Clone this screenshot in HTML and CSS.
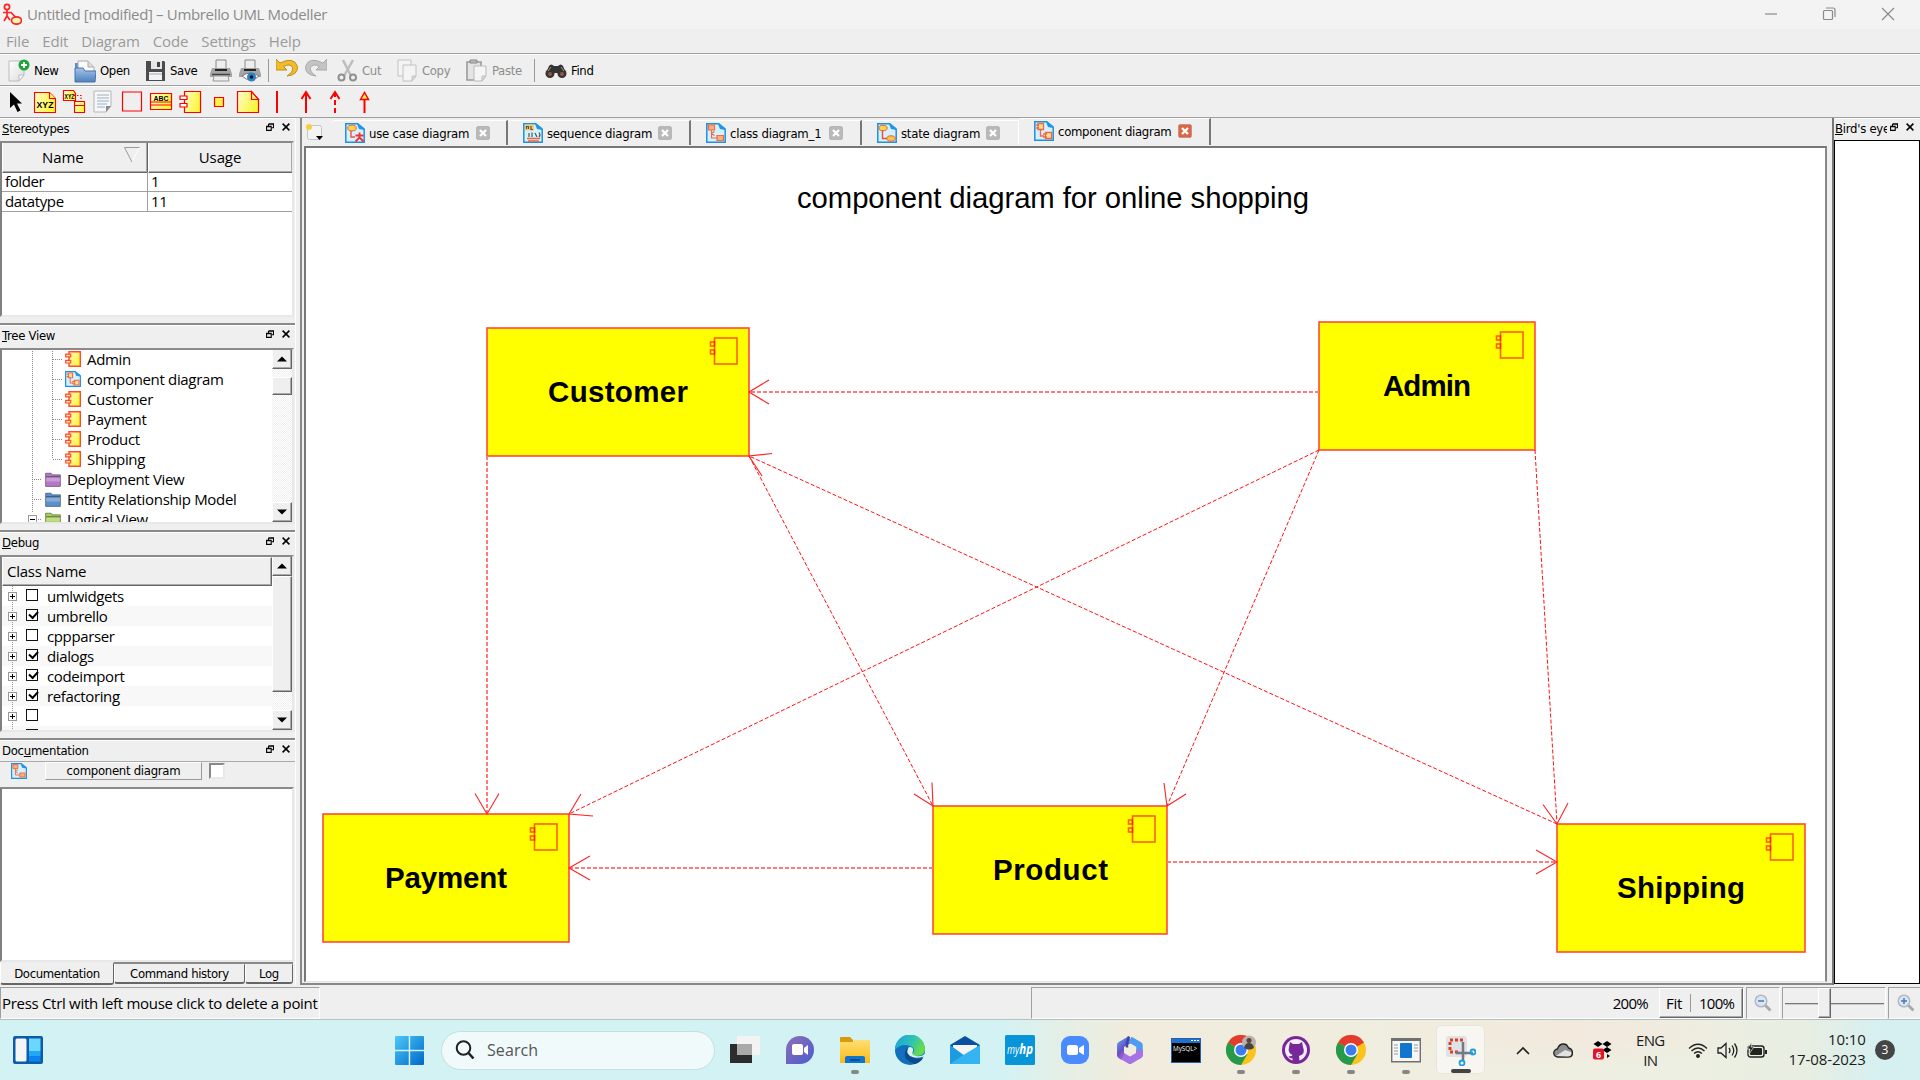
FILE: index.html
```html
<!DOCTYPE html>
<html lang="en">
<head>
<meta charset="utf-8">
<title>Untitled [modified] – Umbrello UML Modeller</title>
<link rel="stylesheet" href="styles.css">
</head>
<body>
<svg class="defs" width="0" height="0">
  <defs>
    <linearGradient id="gy" x1="0" x2="1" y1="0" y2=".4"><stop offset="0" stop-color="#fffbd0"/><stop offset="1" stop-color="#fdf63a"/></linearGradient>
    <linearGradient id="gwin" x1="0" x2="1" y1="0" y2="1"><stop offset="0" stop-color="#4cc8fb"/><stop offset="1" stop-color="#0067c8"/></linearGradient>
    <linearGradient id="gfold" x1="0" x2="0" y1="0" y2="1"><stop offset="0" stop-color="#ffdf73"/><stop offset="1" stop-color="#fcb918"/></linearGradient>
    <linearGradient id="gchat" x1="0" x2="1" y1="0" y2="1"><stop offset="0" stop-color="#8f6fb4"/><stop offset="1" stop-color="#4a5cd0"/></linearGradient>
    <linearGradient id="gedge" x1="0" x2="1" y1="0" y2=".4"><stop offset="0" stop-color="#1c9fe2"/><stop offset=".6" stop-color="#2cc3b5"/><stop offset="1" stop-color="#66dc4c"/></linearGradient>
    <linearGradient id="gopen" x1="0" x2="0" y1="0" y2="1"><stop offset="0" stop-color="#a4c4ea"/><stop offset="1" stop-color="#4f80bd"/></linearGradient>
    <linearGradient id="gm" x1="0" x2=".6" y1="0" y2="1"><stop offset="0" stop-color="#5a8fe8"/><stop offset=".5" stop-color="#6a4fc4"/><stop offset="1" stop-color="#b06ae0"/></linearGradient>
    <linearGradient id="gpage" x1="0" x2="1" y1="0" y2="1"><stop offset="0" stop-color="#fff"/><stop offset="1" stop-color="#dcdcdc"/></linearGradient>
  </defs>
  <symbol id="comp" viewBox="0 0 16 16"><path d="M4 .7h11.3v14.6H4z" fill="url(#gy)" stroke="#ff4a30" stroke-width="1.4"/><path d="M.7 3.2h5v2.6h-5zM.7 9.4h5V12h-5z" fill="#ffe9a0" stroke="#ff4a30" stroke-width="1.2"/></symbol>
  <symbol id="page" viewBox="0 0 20 20"><path d="M.8.8h12L19.2 6v13.2H.8z" fill="#d5f1fd" stroke="#1e90e0" stroke-width="1.5"/><path d="M12 1l2 5 5 1V5z" fill="#2196e8"/></symbol>
  <symbol id="pcomp" viewBox="0 0 20 20"><use href="#page"/><path d="M4 2.500h5.500v6H4zM11.500 11.500h6v6h-6z" fill="#ffe28a" stroke="#f2664a" stroke-width="1.300"/><path d="M2 4h3M2 7h3M6.500 8.500V15H10M9 13h4M9 16h4" fill="none" stroke="#f2664a" stroke-width="1.300"/></symbol>
  <symbol id="pclass" viewBox="0 0 20 20"><use href="#page"/><path d="M2.500 2h6v5h-6zM11 12.500h6.500v5H11z" fill="#fbb07a" stroke="#ee6a48" stroke-width="1.200"/><path d="M5.500 7v8H11M5.500 10.500l3-2M5.500 10.500l3 2" fill="none" stroke="#ee6a48" stroke-width="1.200"/></symbol>
  <symbol id="pstate" viewBox="0 0 20 20"><use href="#page"/><path d="M5.500 7v8.500H11" fill="none" stroke="#f04a3c" stroke-width="1.400"/><ellipse cx="6" cy="5" rx="4.200" ry="2.700" fill="#ffd34d" stroke="#e0643c"/><ellipse cx="14" cy="15.500" rx="4.200" ry="2.700" fill="#ffc04d" stroke="#e0643c"/></symbol>
  <symbol id="puse" viewBox="0 0 20 20"><use href="#page"/><ellipse cx="7" cy="5" rx="4.300" ry="2.900" fill="#ffd34d" stroke="#e0643c"/><path d="M6 8v6h4" fill="none" stroke="#f25040" stroke-width="1.400"/><path d="M14.500 9.500v5.500M10.500 12.500h8M14.500 14.500l-4 4M14.500 14.500l4 4" fill="none" stroke="#f23030" stroke-width="1.800"/></symbol>
  <symbol id="pseq" viewBox="0 0 20 20"><use href="#page"/><path d="M2 1.500h9v6H2z" fill="#f7c96a"/><path d="M3.500 6V3.500h2V6M8 3v3.500h2M6 10v4M9 9.500v4.500M12 10l2 4M16 9.500q2 2.500 0 4.500" fill="none" stroke="#555" stroke-width="1.200"/><path d="M4 15.500h13M5 18h11" stroke="#f0643c" stroke-width="1.400"/></symbol>
  <symbol id="float" viewBox="0 0 8 8"><path d="M2.500 .7h5v4h-2M2.500 1.200h5M2.500 1v2" fill="none" stroke="#000" stroke-width="1.100"/><path d="M.6 3.300h4.600v4.100H.6zM.6 3.800h4.600" fill="none" stroke="#000" stroke-width="1.100"/></symbol>
  <symbol id="x" viewBox="0 0 8 8"><path d="M.6.600l6.800 6.800M7.400.600L.6 7.400" stroke="#000" stroke-width="1.500"/></symbol>
  <symbol id="up" viewBox="0 0 10 6"><path d="M0 5.500L5 .5l5 5z"/></symbol>
  <symbol id="down" viewBox="0 0 10 6"><path d="M0 .5L5 5.500l5-5z"/></symbol>
  <symbol id="folder" viewBox="0 0 16 15"><path d="M.6 3V1.200h5.500l.8 1.600H15.400v11.600H.6z" fill="currentColor" stroke="#0006"/><path d="M1 4.800h14" stroke="#0007"/><path d="M1 5.500h14v4H1z" fill="#fff4"/></symbol>
  <symbol id="tclose" viewBox="0 0 14 14"><rect x=".5" y=".5" width="13" height="13" rx="1.500" fill="currentColor" stroke="#0002"/><path d="M4 4l6 6M10 4l-6 6" stroke="#fff" stroke-width="2.300"/></symbol>
  <symbol id="mag" viewBox="0 0 18 18"><path d="M11 11l5.500 5.500" stroke="#aaa" stroke-width="3"/><circle cx="7" cy="7" r="5.800" fill="#d5e6f8" stroke="#b4b8bf" stroke-width="1.500"/></symbol>
  <symbol id="chrome" viewBox="0 0 30 30"><circle cx="15" cy="15" r="15" fill="#fcc31e"/><path d="M15 15L2 7.500A15 15 0 0 1 28 7.500z" fill="#e33b2e"/><path d="M15 15L2 7.500A15 15 0 0 0 15 30l6.500-11z" fill="#26994a"/><circle cx="15" cy="15" r="7" fill="#fff"/><circle cx="15" cy="15" r="5.500" fill="#3b7df0"/></symbol>
</svg>

<header class="titlebar">
  <svg class="logo" width="20" height="22" viewBox="0 0 20 22" fill="none" stroke="#f22" stroke-width="1.700"><circle cx="5" cy="4" r="2.600"/><path d="M5 7v6M1 9.500h8l5 5M5 13l-3 5M5 13l3 4"/><ellipse cx="14.500" cy="17.500" rx="5" ry="3.600" fill="#fff8b0"/></svg>
  <span class="title">Untitled [modified] – Umbrello UML Modeller</span>
  <svg class="winbtns" width="132" height="14" viewBox="0 0 132 14" fill="none" stroke="#8a8a8a" stroke-width="1.200"><path d="M0 7h12"/><rect x="58.500" y="3.500" width="9" height="9" rx="1"/><path d="M61 1h7q2 0 2 2v7M117 1l12 12M129 1l-12 12"/></svg>
</header>
<nav class="menubar"><span>File</span><span>Edit</span><span>Diagram</span><span>Code</span><span>Settings</span><span>Help</span></nav>

<div class="toolbar main">
  <div class="tool t-new"><svg width="22" height="24" viewBox="0 0 22 24"><path d="M1 2h15v14l-5 6H1z" fill="url(#gpage)" stroke="#bbb"/><path d="M16 16h-5v6z" fill="#fff" stroke="#bbb"/><circle cx="16" cy="6" r="5.500" fill="#1fa33c"/><path d="M16 3v6M13 6h6" stroke="#fff" stroke-width="1.800"/></svg>New</div>
  <div class="tool t-open"><svg width="22" height="24" viewBox="0 0 22 24"><path d="M1 4h6v6H1z" fill="#5d8dc6"/><path d="M4 2h10l6 6v8H4z" fill="#fafafa" stroke="#aaa"/><path d="M14 2v6h6" fill="#ddd" stroke="#aaa"/><path d="M1 9h8l2 3h11l-1 11H1z" fill="url(#gopen)" stroke="#4672aa"/></svg>Open</div>
  <div class="tool t-save"><svg width="21" height="23" viewBox="0 0 21 23"><path d="M1 2h18l1 1v19H1z" fill="#4c4c50"/><path d="M6 2h11v8H6z" fill="#e6e6e6"/><path d="M12 3h3v5h-3z" fill="#444"/><path d="M4 13h13v8H4z" fill="#f4f4f4"/><path d="M4 15h13" stroke="#aaa"/></svg>Save</div>
  <svg class="i-print" width="22" height="24" viewBox="0 0 22 24"><path d="M6 1h10v9H6z" fill="#eee" stroke="#888"/><path d="M2 9h18l2 6v3H0v-3z" fill="#a4a4a4"/><path d="M5 11h12" stroke="#222" stroke-width="2"/><path d="M2 15.500h18" stroke="#444" stroke-width="1.500"/><path d="M4 17h14l1 5H3z" fill="#ececec" stroke="#999"/></svg>
  <svg class="i-prev" width="22" height="24" viewBox="0 0 22 24"><path d="M6 1h10v9H6z" fill="#eee" stroke="#888"/><path d="M2 9h18l2 6v3H0v-3z" fill="#a4a4a4"/><path d="M5 11h12" stroke="#222" stroke-width="2"/><path d="M3 17q8-6 17 0-8 8-17 0z" fill="#fff" stroke="#777"/><circle cx="12.500" cy="18" r="4.500" fill="#2c83c4"/><circle cx="12.500" cy="18" r="1.800" fill="#112"/></svg>
  <i class="sep"></i>
  <svg class="i-undo" width="22" height="20" viewBox="0 0 22 20"><path d="M0 1v11h11L7.500 8.500Q14 5 16.500 9.500 17.500 14 11 18 22 17 21.500 8.500 18-2 4 5z" fill="#f0bc2c" stroke="#c08f14"/></svg>
  <svg class="i-redo" width="22" height="20" viewBox="0 0 22 20"><path d="M22 1v11H11l3.500-3.500Q8 5 5.500 9.500 4.500 14 11 18 0 17 .5 8.500 4-2 18 5z" fill="#c4c4c4" stroke="#aaa"/></svg>
  <div class="tool off t-cut"><svg width="21" height="23" viewBox="0 0 21 23" fill="none"><path d="M6 1l8 16M16 1L7 17" stroke="#bdbdbd" stroke-width="2.500"/><circle cx="4.500" cy="18.500" r="3" stroke="#909090" stroke-width="2"/><circle cx="16" cy="18.500" r="3" stroke="#909090" stroke-width="2"/></svg>Cut</div>
  <div class="tool off t-copy"><svg width="21" height="23" viewBox="0 0 21 23"><path d="M1 1h13v16H1z" fill="#f4f4f4" stroke="#c2c2c2"/><path d="M6 6h13v11l-4 5H6z" fill="#f4f4f4" stroke="#c2c2c2"/><path d="M19 17h-4v5z" fill="#ddd" stroke="#c2c2c2"/></svg>Copy</div>
  <div class="tool off t-paste"><svg width="23" height="23" viewBox="0 0 23 23"><path d="M2 3h14v18H2z" fill="#e4e4e4" stroke="#9b9b9b" stroke-width="1.600"/><path d="M5 1h7v3H5z" fill="#bbb" stroke="#888"/><path d="M9 7h12v10l-4 5H9z" fill="#f5f5f5" stroke="#bbb"/><path d="M21 17h-4v5z" fill="#ddd" stroke="#bbb"/></svg>Paste</div>
  <i class="sep"></i>
  <div class="tool t-find"><svg width="22" height="16" viewBox="0 0 22 16"><path d="M4 3q2-3 5 0h4q3-3 5 0l3 7H1z" fill="#333"/><circle cx="5" cy="10.500" r="4.500" fill="#3a3230"/><circle cx="17" cy="10.500" r="4.500" fill="#3a3230"/><circle cx="5" cy="11" r="2" fill="#8a5a48"/><circle cx="17" cy="11" r="2" fill="#8a5a48"/><path d="M6 4l-3 4M16 4l3 4" stroke="#999"/></svg>Find</div>
</div>

<div class="toolbar work">
  <svg width="584" height="24" viewBox="0 0 584 24" fill="none">
    <path d="M10 2v16l4-3.500 3.500 7.500 3-1.500-3.500-7h5z" fill="#000"/>
    <g stroke="#f00" stroke-width="1.100"><path d="M34.500 2.500h15l6 6v14h-21z" fill="url(#gy)"/><path d="M49.500 2.500v6h6" fill="#fff36b"/><path d="M63.500.500h10l2 3v7h-12z" fill="url(#gy)"/><path d="M74 5.500h7v5" stroke-dasharray="1.500 1.500"/><path d="M74.500 11.500h10v11h-10zM74.500 15.500h10" fill="url(#gy)"/></g>
    <text class="glyph" x="45" y="18" text-anchor="middle" textLength="17" lengthAdjust="spacingAndGlyphs">XYZ</text><text class="glyph s" x="69.500" y="8.500" text-anchor="middle" textLength="10" lengthAdjust="spacingAndGlyphs">XYZ</text>
    <path d="M94 1h17v15l-5 6H94z" fill="#f7f7f7" stroke="#b5b5b5"/><path d="M97 5h12M97 8h12M97 11h12M97 14h10M97 17h8" stroke="#9bb0c8"/><path d="M111 16h-5v6z" fill="#888"/>
    <g stroke="#f00" stroke-width="1.200"><path d="M122.500 2h19v19h-19z"/><path d="M150.500 3.500h21v16h-21zM150.500 12h21M150.500 15h21" fill="url(#gy)"/><path d="M184.500 1.500h16v21h-16z" fill="url(#gy)"/><path d="M180 6h7v3.500h-7zM180 13.500h7V17h-7z" fill="#fff"/><path d="M214.500 7.500h9v9h-9z" fill="#fff04c"/><path d="M237.500 1.500h14l7 8v13h-21z" fill="url(#gy)"/><path d="M251.500 1.500v8h7z" fill="#fff46a"/></g>
    <text class="glyph s" x="161" y="10.500" text-anchor="middle" textLength="15" lengthAdjust="spacingAndGlyphs">ABC</text>
    <g stroke="#f00" stroke-width="2"><path d="M277 1v22M306 2v21M301.500 9l4.500-7 4.500 7"/><path d="M335 2v21" stroke-dasharray="5 3"/><path d="M330.500 9l4.500-7 4.500 7M364.500 8v15"/><path d="M360.500 9.500l4-7 4 7z" stroke-width="1.500" fill="#ffef50"/></g>
  </svg>
</div>

<main class="workspace">
  <aside class="left">
    <section class="dock d-ster">
      <h2><span><u>S</u>tereotypes</span><svg width="8" height="8"><use href="#float"/></svg><svg width="8" height="8"><use href="#x"/></svg></h2>
      <div class="panel">
        <div class="grid head"><div class="cell">Name<svg class="sort" width="16" height="16" viewBox="0 0 16 16" fill="none"><path d="M15 1L8 15" stroke="#fff"/><path d="M15.500.500H.5L8 15" stroke="#999"/></svg></div><div class="cell">Usage</div></div>
        <div class="grid"><div>folder</div><div>1</div></div>
        <div class="grid"><div>datatype</div><div>11</div></div>
      </div>
    </section>
    <section class="dock d-tree">
      <h2><span><u>T</u>ree View</span><svg width="8" height="8"><use href="#float"/></svg><svg width="8" height="8"><use href="#x"/></svg></h2>
      <div class="panel split">
        <ul class="tree">
          <li class="deep"><svg width="16" height="16"><use href="#comp"/></svg>Admin</li>
          <li class="deep"><svg width="16" height="16"><use href="#pcomp"/></svg>component diagram</li>
          <li class="deep"><svg width="16" height="16"><use href="#comp"/></svg>Customer</li>
          <li class="deep"><svg width="16" height="16"><use href="#comp"/></svg>Payment</li>
          <li class="deep"><svg width="16" height="16"><use href="#comp"/></svg>Product</li>
          <li class="deep last"><svg width="16" height="16"><use href="#comp"/></svg>Shipping</li>
          <li><svg class="purple" width="16" height="15"><use href="#folder"/></svg>Deployment View</li>
          <li><svg class="blue" width="16" height="15"><use href="#folder"/></svg>Entity Relationship Model</li>
          <li class="exp"><i class="pm minus"></i><svg class="green" width="16" height="15"><use href="#folder"/></svg>Logical View</li>
        </ul>
        <div class="scroll"><b class="btn"><svg width="10" height="6"><use href="#up"/></svg></b><b class="thumb small"></b><b class="btn end"><svg width="10" height="6"><use href="#down"/></svg></b></div>
      </div>
    </section>
    <section class="dock d-debug">
      <h2><span><u>D</u>ebug</span><svg width="8" height="8"><use href="#float"/></svg><svg width="8" height="8"><use href="#x"/></svg></h2>
      <div class="panel split">
        <div class="classes">
          <div class="clshead">Class Name</div>
          <ul class="checks">
            <li><i class="pm"></i><em></em>umlwidgets</li>
            <li><i class="pm"></i><em class="on"></em>umbrello</li>
            <li><i class="pm"></i><em></em>cppparser</li>
            <li><i class="pm"></i><em class="on"></em>dialogs</li>
            <li><i class="pm"></i><em class="on"></em>codeimport</li>
            <li><i class="pm"></i><em class="on"></em>refactoring</li>
            <li><i class="pm"></i><em></em></li>
            <li><i class="pm none"></i><em></em></li>
          </ul>
        </div>
        <div class="scroll"><b class="btn"><svg width="10" height="6"><use href="#up"/></svg></b><b class="thumb big"></b><b class="btn end"><svg width="10" height="6"><use href="#down"/></svg></b></div>
      </div>
    </section>
    <section class="dock d-doc">
      <h2><span>Doc<u>u</u>mentation</span><svg width="8" height="8"><use href="#float"/></svg><svg width="8" height="8"><use href="#x"/></svg></h2>
      <div class="docbar"><svg width="16" height="16"><use href="#pclass"/></svg><div class="docname">component diagram</div><div class="docbox"></div></div>
      <div class="panel"></div>
      <div class="btabs"><span class="cur">Documentation</span><span>Command history</span><span>Log</span></div>
    </section>
  </aside>

  <section class="center">
    <div class="tabs">
      <svg class="newtab" width="22" height="20" viewBox="0 0 22 20"><rect x="2.500" y="2.500" width="14" height="14" rx="2" fill="#f4f4f4" stroke="#c5c5c5"/><circle cx="4" cy="4" r="3" fill="#f7cf3c"/><path d="M11 13h7l-3.500 4z"/></svg>
      <div class="tab w1"><svg width="20" height="20"><use href="#puse"/></svg><span>use case diagram</span><svg class="tc" width="14" height="14"><use href="#tclose"/></svg></div>
      <div class="tab w2"><svg width="20" height="20"><use href="#pseq"/></svg><span>sequence diagram</span><svg class="tc" width="14" height="14"><use href="#tclose"/></svg></div>
      <div class="tab w3"><svg width="20" height="20"><use href="#pclass"/></svg><span>class diagram_1</span><svg class="tc" width="14" height="14"><use href="#tclose"/></svg></div>
      <div class="tab w4"><svg width="20" height="20"><use href="#pstate"/></svg><span>state diagram</span><svg class="tc" width="14" height="14"><use href="#tclose"/></svg></div>
      <div class="tab w5"><svg width="20" height="20"><use href="#pcomp"/></svg><span>component diagram</span><svg class="tc red" width="14" height="14"><use href="#tclose"/></svg></div>
    </div>
    <div class="canvas">
      <svg width="1518" height="834" viewBox="306 148 1518 834">
        <defs><g id="cicon" fill="none" stroke="#f00" stroke-opacity=".62" stroke-width="1.600"><rect x="-34.500" y="10" width="22.500" height="26"/><rect x="-38.500" y="14" width="4" height="4"/><rect x="-38.500" y="22" width="4" height="4"/></g></defs>
        <text class="caption" x="797" y="208" textLength="512">component diagram for online shopping</text>
        <g class="node"><rect x="487" y="328" width="262" height="128"/><rect x="1319" y="322" width="216" height="128"/><rect x="323" y="814" width="246" height="128"/><rect x="933" y="806" width="234" height="128"/><rect x="1557" y="824" width="248" height="128"/></g>
        <use href="#cicon" x="749" y="328"/><use href="#cicon" x="1535" y="322"/><use href="#cicon" x="569" y="814"/><use href="#cicon" x="1167" y="806"/><use href="#cicon" x="1805" y="824"/>
        <g class="name"><text x="548" y="402" textLength="140">Customer</text><text x="1383" y="396" textLength="88">Admin</text><text x="385" y="888" textLength="122">Payment</text><text x="993" y="880" textLength="115">Product</text><text x="1617" y="898" textLength="128">Shipping</text></g>
        <g class="dash straight"><path d="M1319 392H749M487 456V814M933 868H569M1167 862H1557"/></g>
        <g class="dash"><path d="M1319 450L569 814"/><path d="M1319 450L1167 806"/><path d="M749 456L933 806"/><path d="M1557 824L749 456"/><path d="M1535 450L1557 824"/></g>
        <path class="heads" d="M769 380L749 392L769 404M475 793.500L487 814L499 793.500M581 794L569 814L593 816M1164 783L1167 806L1186 794M914 794L933 806L932 782.500M772 453.500L749 456L762 476M1543 804.500L1557 824L1568 803M590 856L569 868L590 880M1536 850L1557 862L1536 874"/>
      </svg>
    </div>
  </section>

  <aside class="right">
    <h2><span><u>B</u>ird's eye</span><svg width="8" height="8"><use href="#float"/></svg><svg width="8" height="8"><use href="#x"/></svg></h2>
    <div class="bird"></div>
  </aside>
</main>

<footer class="status">
  <div class="sunk msg">Press Ctrl with left mouse click to delete a point</div>
  <div class="sunk zoom"><span>200%</span><div class="zbtn"><span>Fit</span><i></i><span>100%</span></div></div>
  <div class="sunk zi"><svg width="18" height="18" viewBox="0 0 18 18"><use href="#mag"/><path d="M4 7h6" stroke="#4f78aa" stroke-width="1.500"/></svg></div>
  <div class="sunk slider"><div class="handle"></div></div>
  <div class="sunk zo"><svg width="18" height="18" viewBox="0 0 18 18"><use href="#mag"/><path d="M4 7h6M7 4v6" stroke="#4f78aa" stroke-width="1.500"/></svg></div>
</footer>

<div class="taskbar">
  <svg class="widgets" width="30" height="28" viewBox="0 0 30 28"><rect width="30" height="28" rx="2" fill="#0c5cab"/><rect x="2.500" y="2.500" width="11" height="23" rx="1.500" fill="#f5f5f5"/><path d="M16 2.500h11.500V15H16z" fill="#6bd6ff"/><path d="M16 15h11.500v5H16z" fill="#22a7f7"/><path d="M16 20h11.500v5.500H16z" fill="#0a84ee"/></svg>
  <svg class="start" width="29" height="29" viewBox="0 0 29 29" fill="url(#gwin)"><path d="M0 1q0-1 1-1h12.700v13.700H0zM15.200 0H28q1 0 1 1v12.700H15.200zM0 15.200h13.700V29H1q-1 0-1-1zM15.200 15.200H29V28q0 1-1 1H15.200z"/></svg>
  <div class="search"><svg width="20" height="20" viewBox="0 0 20 20" fill="none" stroke="#222" stroke-width="2"><circle cx="8.500" cy="8" r="6.800"/><path d="M13.500 13l5 5.500" stroke-width="2.600"/></svg>Search</div>
  <div class="apps">
    <div><svg viewBox="0 0 30 30"><path d="M0 9h22v19H0z" fill="#2c2c2c"/><path d="M7 1h23v19H7z" fill="#f3f3f3"/><path d="M7 9h15v11H7z" fill="#a9a9a9"/></svg></div>
    <div><svg viewBox="0 0 30 30"><path d="M1 29V15A14 14 0 1 1 15 29z" fill="url(#gchat)"/><rect x="7" y="9" width="11" height="11" rx="2" fill="#fff"/><path d="M19 13l4-3v10l-4-3z" fill="#fff"/></svg></div>
    <div class="run"><svg viewBox="0 0 30 30"><path d="M0 3q0-1 1-1h9l3 3v4H0z" fill="#dc9a08"/><path d="M0 7h13l2-2h14q1 0 1 1v22H0z" fill="url(#gfold)"/><path d="M5 28v-5q0-2 2-2h16q2 0 2 2v5z" fill="#1173c9"/><path d="M10 25h10" stroke="#0b4f94" stroke-width="2"/></svg></div>
    <div><svg viewBox="0 0 30 30"><circle cx="15" cy="15" r="15" fill="#1170bd"/><path d="M0 15A15 15 0 0 1 30 14q0 7-8 7-5 0-4-3 3-5-3-7Q6 8 0 15z" fill="url(#gedge)"/><path d="M12 13q-7 11 8 16 6-2 8-6-12 3-13-6z" fill="#0c4a8c"/><path d="M14 12q-4 5 1 9 5 3 12 1 2-1 3 0l0-3q-4 3-9 2-5-1-3-5 1-4-4-4z" fill="#d9f3f3"/></svg></div>
    <div><svg viewBox="0 0 30 30"><path d="M0 10L15 1l15 9v5H0z" fill="#0b50a0"/><path d="M3 10h24v12H3z" fill="#f4f4f4"/><path d="M0 10l15 11L30 10v19H0z" fill="#1c9be2"/><path d="M0 29l15-10 15-9v19z" fill="#35b4f2"/></svg></div>
    <div><svg viewBox="0 0 30 30"><rect width="30" height="30" rx="1.500" fill="#0894d8"/><text x="2" y="19" class="hp" textLength="26" lengthAdjust="spacingAndGlyphs">my<tspan font-weight="bold" font-size="15">hp</tspan></text></svg></div>
    <div><svg viewBox="0 0 30 30"><rect x="1" y="1" width="28" height="28" rx="9" fill="#4a8cff"/><rect x="7" y="10" width="11" height="10" rx="2.500" fill="#fff"/><path d="M19 13l5-3v10l-5-3z" fill="#fff"/></svg></div>
    <div><svg viewBox="0 0 30 30" stroke-linejoin="round" fill="none"><path d="M15 4.500L5.500 10v10l3 2" stroke="url(#gm)" stroke-width="7"/><path d="M15 4.500L24.500 10v8" stroke="#4d9cf0" stroke-width="6.500"/><path d="M24.500 15v5L15 25.500 8 21.500" stroke="#a673e4" stroke-width="7"/><path d="M14 1.500l-2 6v5" stroke="#3c48a8" stroke-width="2.500"/></svg></div>
    <div><svg viewBox="0 0 30 30"><rect x=".5" y="3.500" width="29" height="24" fill="#000" stroke="#2460ac"/><path d="M1 4h28v4H1z" fill="#2070d0"/><path d="M20 5.500h2M23 5.500h2M26 5.500h2" stroke="#fff"/><text x="2" y="16" class="sql" textLength="24" lengthAdjust="spacingAndGlyphs">MySQL&gt;</text></svg></div>
    <div class="run"><svg viewBox="0 0 30 30"><use href="#chrome" width="30" height="30"/><circle cx="23" cy="7.500" r="7" fill="#b9b2ac"/><circle cx="23" cy="5.500" r="2.500" fill="#5c4238"/><path d="M18 13q1-5 5-5t5 5q-5 3-10 0z" fill="#444"/></svg></div>
    <div class="run"><svg viewBox="0 0 30 30"><circle cx="15" cy="15" r="14" fill="#78279b"/><circle cx="15" cy="15" r="11" fill="#f3eef6"/><path d="M9 7l3 2h6l3-2 1 5q3 7-4 9l.500 5h-7v-3q-3 1-4-2 3 1 4-1-5-2-3.500-8z" fill="#78279b"/></svg></div>
    <div class="run"><svg viewBox="0 0 30 30"><use href="#chrome" width="30" height="30"/></svg></div>
    <div class="run"><svg viewBox="0 0 30 30"><path d="M.7 3.700h28.600v23H.7z" fill="#f6f6f6" stroke="#707070" stroke-width="1.400"/><path d="M0 3h30v3H0z" fill="#707070"/><rect x="9" y="8" width="12" height="15" rx="1" fill="#1276ce"/><path d="M3 10h4M3 13h4M3 16h4M3 19h4M23 10h4M23 13h4M23 16h4" stroke="#999"/></svg></div>
    <div class="run active"><svg viewBox="0 0 30 30"><rect x="0" y="0" width="21" height="21" rx="3" fill="#dfe2e8"/><path d="M17 4H4v12h9" fill="none" stroke="#dc4318" stroke-width="3" stroke-dasharray="3 2"/><path d="M17 6v18M10 17h17" stroke="#747a82" stroke-width="2.500"/><circle cx="16" cy="27" r="2.500" fill="none" stroke="#1c9fe0" stroke-width="1.800"/><circle cx="27" cy="16" r="2.500" fill="none" stroke="#1c9fe0" stroke-width="1.800"/></svg></div>
  </div>
  <svg class="chev" width="14" height="9" viewBox="0 0 14 9" fill="none" stroke="#222" stroke-width="1.700"><path d="M1 8l6-6 6 6"/></svg>
  <svg class="cloud" width="20" height="15" viewBox="0 0 20 15"><path d="M5 14a4 4 0 0 1-.5-8Q6 1 10.500 1 14 1 15.500 5 19.500 6 19.500 10T15 14z" fill="#8f8f8f" stroke="#222" stroke-width="1.300"/><path d="M3 13l9-6 6 2q1 4-3 4.500z" fill="#e2e2e2"/></svg>
  <svg class="drop" width="19" height="19" viewBox="0 0 19 19"><path d="M5 0l4.500 3L5 6 .5 3zM14 0l4.500 3L14 6 9.500 3zM14 6l4.500 3-4.500 3-4.500-3zM14 13l3 2-3 2z" fill="#000"/><rect y="7.500" width="11" height="11" rx="2" fill="#e3122b"/><text x="5.500" y="16.500" class="six" text-anchor="middle">6</text></svg>
  <div class="lang">ENG<br>IN</div>
  <svg class="wifi" width="20" height="15" viewBox="0 0 20 15" fill="none" stroke="#222" stroke-width="1.300"><path d="M1 5.500q9-8.500 18 0M3.500 8q6.500-6 13 0M6 10.500q4-3.500 8 0"/><circle cx="10" cy="13" r="1.300" fill="#222"/></svg>
  <svg class="snd" width="21" height="17" viewBox="0 0 21 17" fill="none" stroke="#222" stroke-width="1.300"><path d="M1 6h3l5-4.500v14L4 11H1zM12 6q2 2.500 0 5M15 3.500q3.500 5 0 10M17.500 1.500q5 7 0 14"/></svg>
  <svg class="bat" width="21" height="17" viewBox="0 0 21 17"><rect x="1" y="4" width="16" height="11" rx="2.500" fill="none" stroke="#222" stroke-width="1.400"/><rect x="3" y="6" width="12" height="7" rx="1" fill="#222"/><path d="M18 8h2v4h-2z" fill="#222"/><path d="M5 0L0 7h3l-1 5 5-7H4z" fill="#222" stroke="#f0ece0" stroke-width=".7"/></svg>
  <div class="clock">10:10<br>17-08-2023</div>
  <div class="badge">3</div>
</div>
</body>
</html>
```
FILE: styles.css
```css
* { box-sizing: border-box; }
body { margin: 0; width: 1920px; height: 1080px; overflow: hidden; display: flex; flex-direction: column; background: #efefef; color: #000; font: 15px/20px "Open Sans", "Noto Sans", sans-serif; letter-spacing: -.37px; }
svg { display: block; flex: none; }
.defs { position: absolute; }
ul { list-style: none; margin: 0; padding: 0; }

.titlebar { height: 29px; flex: none; background: #f3f3f3; display: flex; align-items: center; padding: 0 23px 1px 2px; color: #8b8b8b; }
.title { margin-left: 5px; letter-spacing: -.34px; }
.winbtns { margin-left: auto; }
.menubar { height: 24px; flex: none; display: flex; gap: 13px; padding: 2px 0 0 6px; color: #9a9a9a; letter-spacing: -.14px; }
.toolbar { height: 32px; flex: none; border-top: 1px solid #9f9f9f; box-shadow: inset 0 1px #fff; display: flex; align-items: center; font: 13px/16px "DejaVu Sans Condensed", "Noto Sans", sans-serif; letter-spacing: -.35px; }
.toolbar.main { padding: 2px 0 0 8px; }
.tool { display: flex; align-items: center; gap: 4px; }
.off { color: #8d8d8d; }
.t-new { width: 66px; } .t-open { width: 71px; } .t-save { width: 65px; }
.i-prev { margin-left: 7px; }
.sep { width: 1px; height: 23px; background: #999; margin-left: 7px; }
.i-undo { margin: -5px 0 0 7px; } .i-redo { margin: -5px 0 0 7px; }
.t-cut { margin-left: 10px; width: 60px; } .t-copy { width: 68px; } .t-paste { width: 62px; }
.t-find { margin-left: 10px; }
.glyph { font: bold 9px "Liberation Sans", sans-serif; fill: #000; letter-spacing: 0; }
.glyph.s { font-size: 7px; }

.workspace { flex: none; height: 868px; display: flex; border-top: 1px solid #9f9f9f; }
h2 { margin: 0; height: 21px; font: 13px/20px "DejaVu Sans Condensed", "Noto Sans", sans-serif; letter-spacing: -.27px; display: flex; align-items: center; padding: 0 5px 0 2px; gap: 8px; border-top: 1px solid #fff; }
h2 span { flex: 1; white-space: nowrap; overflow: hidden; }
h2 svg { margin-top: -4px; }

.left { width: 296px; display: flex; flex-direction: column; border-right: 1px solid #fff; }
.dock { display: flex; flex-direction: column; border-bottom: 2px solid #8a8a8a; }
.panel { border: 2px solid; border-color: #8a8a8a #e8e8e8 #e8e8e8 #808080; background: #fff; flex: 1; margin: 2px 1px 6px 0; overflow: hidden; }
.d-ster { height: 207px; } .d-tree { height: 207px; } .d-debug { height: 208px; } .d-doc { height: 245px; border: 0; }
.grid { display: grid; grid-template-columns: 146px 145px; height: 20px; border-bottom: 1px solid #a0a0a0; line-height: 19px; width: 291px; }
.grid > div { border-right: 1px solid #a0a0a0; padding-left: 3px; }
.grid > div + div { padding-left: 3px; }
.grid.head { height: 29px; border: 0; }
.grid .cell { background: #efefef; border: 1px solid #666; border-left-color: #fff; border-top: 0; line-height: 29px; display: flex; justify-content: center; padding: 0 1px 0 0; box-shadow: inset -1px -1px #aaa; letter-spacing: -.1px; }
.grid .cell:first-child { justify-content: flex-start; gap: 40px; padding-left: 39px; }
.sort { margin-top: 4px; }
.split { display: flex; }
.tree { flex: 1; height: 172px; line-height: 20px; margin-top: -1px; background: repeating-linear-gradient(#888 0 1px, transparent 1px 2px) 30px 0/1px 163px no-repeat; }
.tree li { height: 20px; display: flex; align-items: center; gap: 6px; padding-left: 43px; white-space: nowrap; letter-spacing: -.33px; background: repeating-linear-gradient(90deg, #888 0 1px, transparent 1px 2px) 32px 10px/8px 1px no-repeat; }
.tree li.deep { padding-left: 63px; background: repeating-linear-gradient(90deg, #888 0 1px, transparent 1px 2px) 51px 10px/9px 1px no-repeat, repeating-linear-gradient(#888 0 1px, transparent 1px 2px) 50px 0/1px 20px no-repeat; }
.tree li.last { background-size: 9px 1px, 1px 10px; }
.tree li.exp { padding-left: 26px; }
.tree .exp .pm { margin-right: 2px; }
.purple { color: #b678c8; } .blue { color: #5c8fce; } .green { color: #a6cf58; }
.pm { flex: none; width: 9px; height: 9px; border: 1px solid #999; background: linear-gradient(#000, #000) center/5px 1px no-repeat, linear-gradient(#000, #000) center/1px 5px no-repeat, #fff; }
.pm.minus { background: linear-gradient(#000, #000) center/5px 1px no-repeat, #fff; }
.pm.none { visibility: hidden; }
.scroll { flex: none; width: 20px; margin-top: -1px; display: flex; flex-direction: column; background: repeating-conic-gradient(#fff 0 25%, #efefef 0 50%) 0 0/2px 2px; }
.btn, .thumb { display: flex; align-items: center; justify-content: center; height: 20px; background: #efefef; border: 1px solid; border-color: #fff #666 #666 #fff; box-shadow: inset -1px -1px #aaa; }
.btn.end { margin-top: auto; }
.thumb.small { height: 18px; margin-top: 8px; }
.thumb.big { height: 116px; }
.classes { flex: 1; overflow: hidden; }
.clshead { height: 29px; padding-left: 4px; line-height: 27px; background: #efefef; border: 1px solid; border-color: #fff #666 #666 #fff; box-shadow: inset -1px -1px #aaa; letter-spacing: -.25px; }
.checks { background: repeating-linear-gradient(#999 0 1px, transparent 1px 2px) 10px 0/1px 150px no-repeat; }
.checks li { height: 20px; display: flex; align-items: center; padding-left: 6px; line-height: 20px; }
.checks li:nth-child(even) { background: #8888880f; }
.checks em { width: 12px; height: 12px; border: 1px solid #111; background: #fff; margin: -2px 9px 0 9px; position: relative; }
.checks em.on::after { content: ""; position: absolute; left: 2px; top: 1px; width: 7px; height: 4px; border: solid #000; border-width: 0 0 2px 2px; transform: rotate(-48deg); }
.docbar { display: flex; align-items: center; height: 24px; padding: 0 0 5px 11px; border-top: 1px solid #aaa; flex: none; }
.docname { width: 157px; height: 18px; margin: 0 7px 0 18px; border: 1px solid; border-color: #fff #999 #999 #fff; font: 13px/16px "DejaVu Sans Condensed", sans-serif; letter-spacing: -.28px; text-align: center; }
.docbox { width: 16px; height: 16px; background: #fff; border: 2px solid; border-color: #888 #e8e8e8 #e8e8e8 #888; }
.d-doc .panel { flex: none; height: 175px; margin: 2px 1px 0 0; }
.btabs { display: flex; font: 13px/17px "DejaVu Sans Condensed", sans-serif; letter-spacing: -.35px; margin-right: 2px; border-top: 2px solid #8a8a8a; height: 23px; }
.btabs span { width: 131px; height: 20px; text-align: center; border: 1px solid; border-color: transparent #666 #666 #fff; border-bottom-width: 2px; border-radius: 0 0 3px 3px; }
.btabs span.cur { width: 114px; height: 23px; line-height: 20px; margin-top: -2px; background: #efefef; border-top: 2px solid #efefef; }
.btabs span:last-child { width: 48px; }

.center { width: 1532px; margin-left: 4px; border: solid #888; border-width: 0 0 2px 2px; display: flex; flex-direction: column; }
.tabs { height: 27px; display: flex; font: 13px/16px "DejaVu Sans Condensed", sans-serif; letter-spacing: -.22px; align-items: flex-end; }
.newtab { margin: 0 5px 2px 3px; }
.tab { height: 25px; display: flex; align-items: center; padding: 0 0 1px 13px; border-top: 1px solid #fff; border-right: 2px solid #777; border-radius: 3px 0 0 0; }
.tab span { margin: 2px 6px 0 4px; white-space: nowrap; }
.tc { color: #b9b9b9; } .tc.red { color: #dc6547; }
.w1 { width: 176px; } .w1 span { width: 101px; }
.w2 { width: 183px; padding-left: 15px; } .w2 span { width: 105px; }
.w3 { width: 171px; padding-left: 15px; } .w3 span { width: 93px; }
.w4 { width: 157px; padding-left: 15px; border-right: 1px solid #fff; } .w4 span { width: 79px; }
.w5 { width: 192px; height: 27px; padding: 0 0 3px 15px; } .w5 span { width: 114px; margin-top: 3px; letter-spacing: -.3px; }
.canvas { flex: 1; border: 2px solid; border-bottom-width: 1px; border-color: #777 #888 #e4e4e4 #777; background: #fff; margin: 1px 5px 1px 2px; overflow: hidden; }
.caption { font: 29.300px "Liberation Sans", sans-serif; letter-spacing: 0; }
.node rect { fill: #ff0; stroke: #ff4a3c; stroke-width: 1.600; }
.name { font: bold 29.500px "Liberation Sans", sans-serif; letter-spacing: 0; }
.dash { fill: none; stroke: #f11; stroke-width: 1; stroke-dasharray: 4 2; }
.dash.straight { stroke: #ff7a7a; stroke-width: 2; }
.heads { fill: none; stroke: #f22; stroke-width: 1.100; }

.right { flex: 1; display: flex; flex-direction: column; border-left: 2px solid #777; }
.right h2 { padding-left: 1px; gap: 8px; }
.right h2 span { flex: none; width: 52px; }
.right h2 svg:nth-of-type(1) { margin-left: -5px; }
.bird { flex: 1; margin: 1px 0 1px; border: 1px solid #000; background: #fff; }

.status { height: 34px; flex: none; display: flex; padding-top: 2px; letter-spacing: -.33px; }
.sunk { height: 32px; border: 1px solid; border-color: #a0a0a0 #fff #fff #a0a0a0; display: flex; align-items: center; }
.msg { width: 320px; padding-left: 1px; white-space: nowrap; letter-spacing: -.3px; }
.zoom { margin-left: 711px; width: 713px; justify-content: flex-end; gap: 11px; letter-spacing: -.7px; }
.zbtn { width: 84px; height: 30px; border: 1px solid; border-color: #fff #666 #666 #fff; box-shadow: inset -1px -1px #aaa; display: flex; align-items: center; gap: 8px; padding-left: 6px; }
.zbtn span:first-child { letter-spacing: -.3px; }
.zbtn i { width: 1px; height: 18px; background: #999; }
.zi { margin-left: 2px; width: 34px; padding-left: 7px; }
.slider { margin-left: 2px; width: 104px; background: linear-gradient(#777 0 1px, #ccc 1px 2px) 2px 15px/99px 2px no-repeat; }
.handle { margin-left: 35px; width: 13px; height: 30px; background: #efefef; border: 1px solid; border-color: #fff #666 #666 #fff; box-shadow: inset -1px -1px #aaa; }
.zo { margin-left: 2px; width: 32px; padding-left: 8px; border-right: 0; }

.taskbar { height: 61px; flex: none; border-top: 1px solid #b3c0c0; background: radial-gradient(ellipse 190px 40px at 1570px 10px, #f3e8dc, #f3e8dc00), linear-gradient(90deg, #d3f2f4 0, #d3f2f4 1000px, #e4efe6 1060px, #f1ecdd 1130px, #efeee0 1480px, #ecefe2 1700px, #e7eee2 1810px, #d6f0f1 1880px); display: flex; align-items: center; letter-spacing: -.3px; color: #1c1c1c; }
.taskbar > * { flex: none; }
.widgets { margin-left: 13px; }
.start { margin-left: 352px; margin-top: 1px; }
.search { margin-left: 17px; width: 274px; height: 39px; border-radius: 20px; background: #f1fafb; border: 1px solid #c3dfe1; display: flex; align-items: center; padding-left: 13px; gap: 12px; font-size: 16px; letter-spacing: .1px; color: #555; }
.apps { display: flex; margin-left: 3px; }
.apps div { width: 55.070px; height: 60px; padding: 15px 0 0 12px; position: relative; }
.apps svg { width: 30px; height: 30px; }
.run::after { content: ""; position: absolute; left: 23px; bottom: 6px; width: 8px; height: 4px; border-radius: 2px; background: #868686; }
.apps .active { width: 49px; height: 49px; margin: 5px 0 0 2px; padding: 10px 0 0 9px; background: #f8f6f0; border-radius: 5px; border: 1px solid #e8e5dc; }
.apps .active::after { left: 14px; bottom: 0; width: 20px; background: #444; }
.hp { font: italic 12px "Open Sans", sans-serif; fill: #fff; letter-spacing: 0; }
.sql { font: 8px "Open Sans", sans-serif; fill: #fff; letter-spacing: 0; }
.six { font: bold 9px "Open Sans", sans-serif; fill: #fff; }
.chev { margin-left: 31px; }
.cloud { margin-left: 23px; }
.drop { margin-left: 20px; }
.lang { margin-left: 21px; width: 35px; text-align: center; line-height: 20px; margin-top: -1px; letter-spacing: -.7px; }
.wifi { margin-left: 20px; }
.snd { margin-left: 9px; }
.bat { margin-left: 9px; }
.clock { margin-left: 10px; width: 88px; text-align: right; line-height: 20px; margin-top: -2px; letter-spacing: -.1px; }
.badge { margin-left: 9px; width: 20px; height: 20px; border-radius: 50%; background: #454545; color: #fff; font: 12px/20px "Open Sans", sans-serif; text-align: center; }
```
